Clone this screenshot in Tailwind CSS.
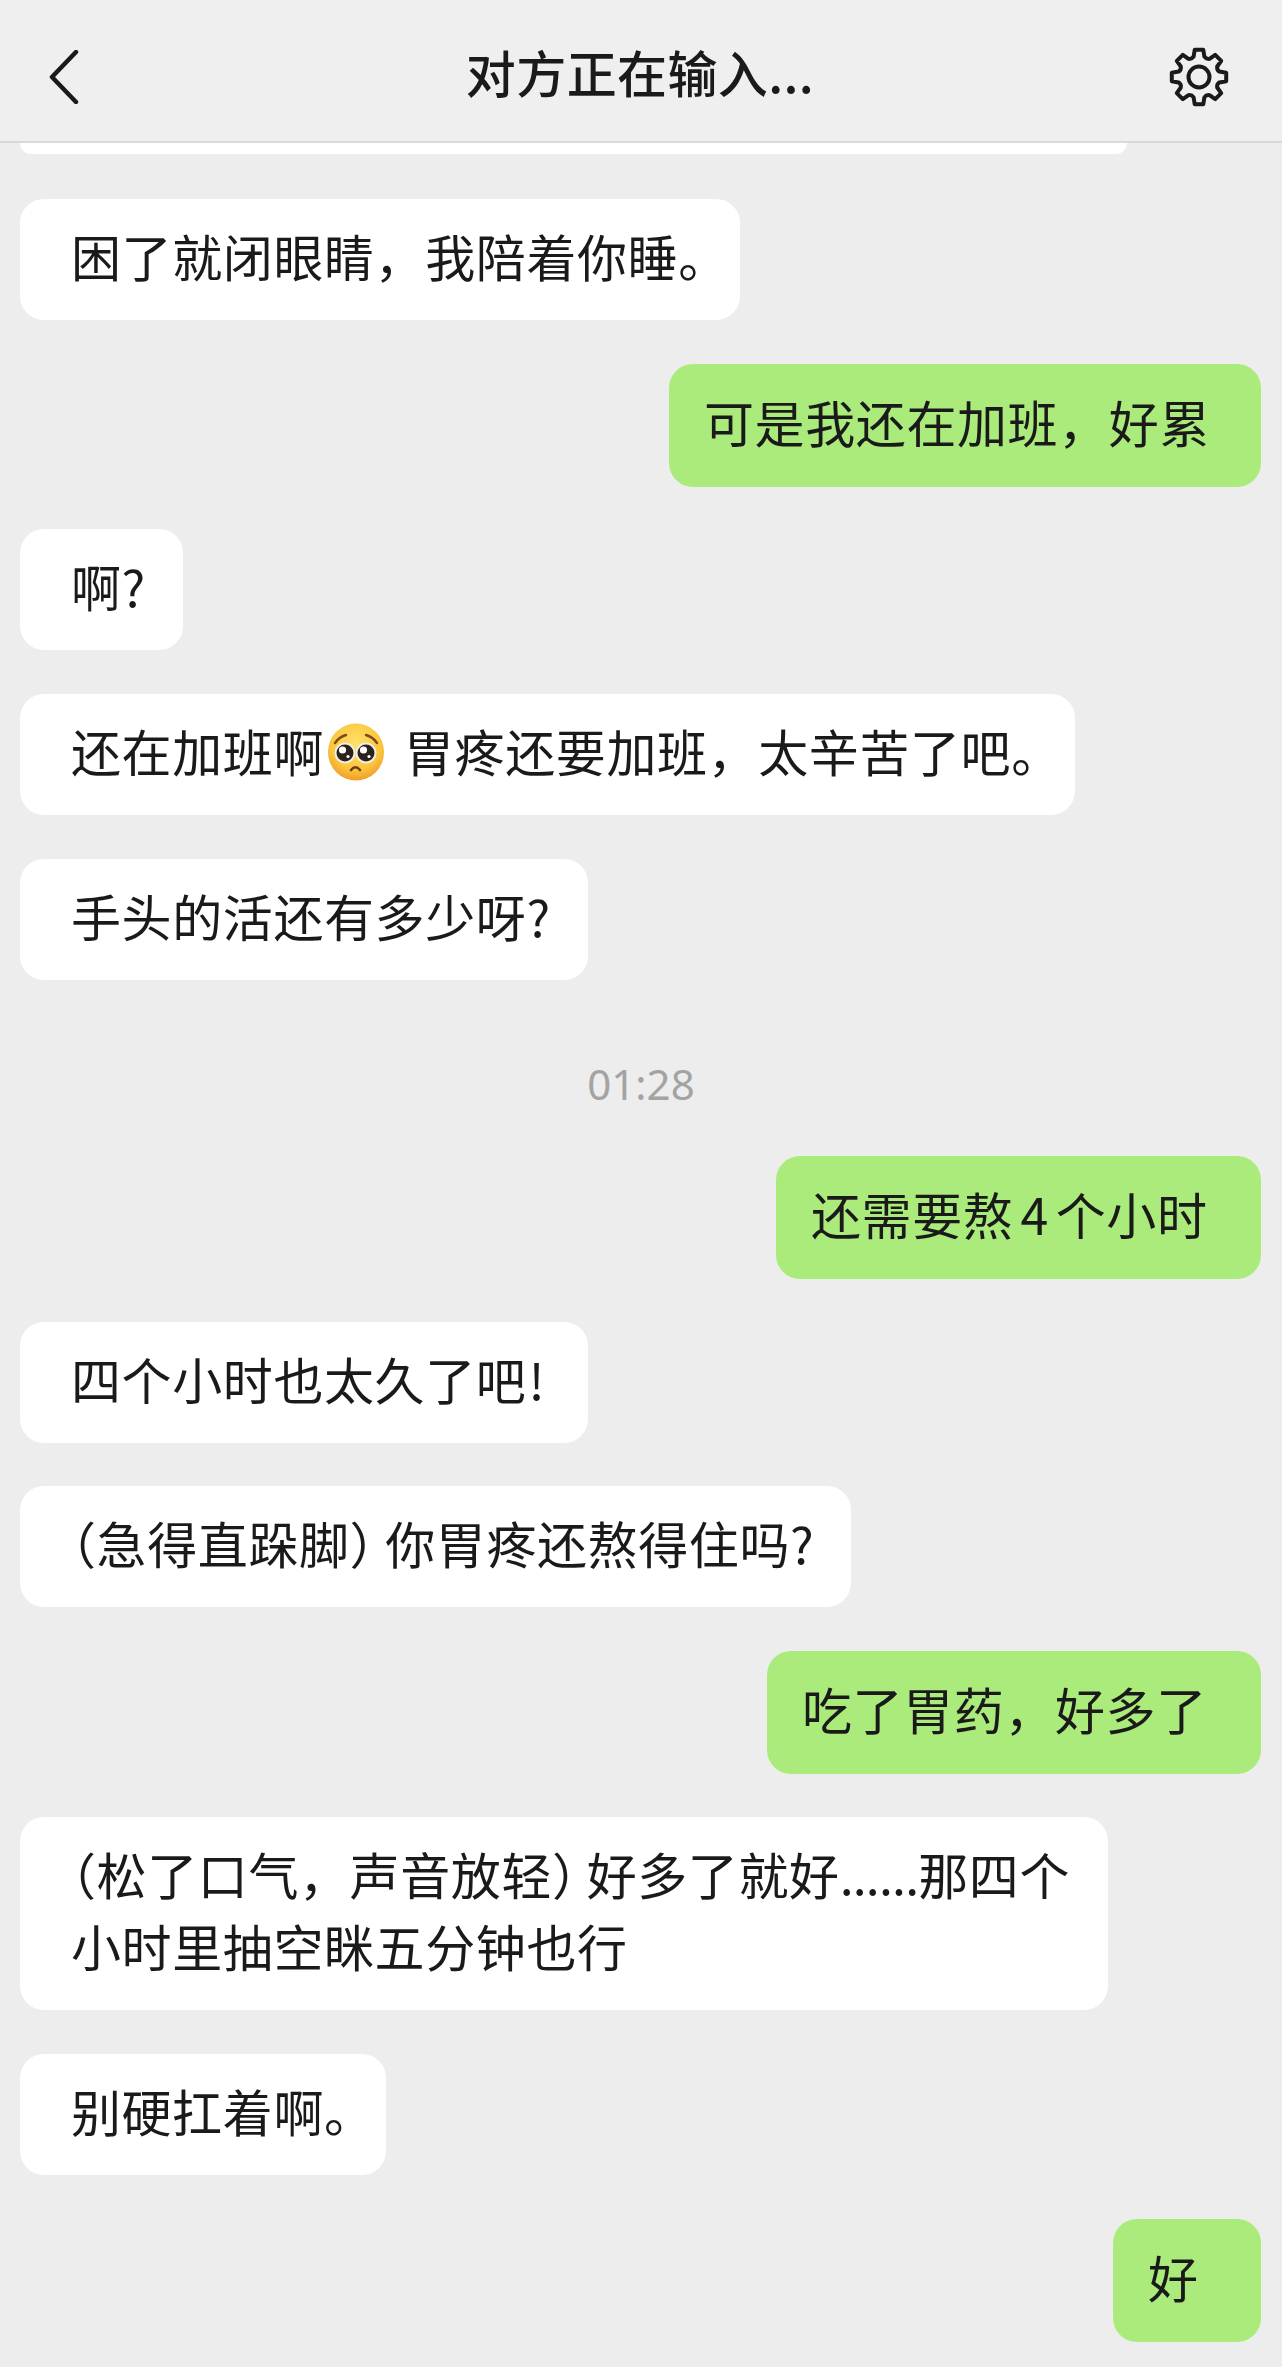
<!DOCTYPE html>
<html lang="zh-CN">
<head>
    <meta charset="UTF-8">
    <meta name="viewport" content="width=device-width, initial-scale=1.0">
    <title>对方正在输入...</title>
    <script src="https://cdn.jsdelivr.net/npm/@tailwindcss/browser@4"></script>
</head>
<body class="bg-[#ededed]">

    <div class="w-[1282px] h-[2367px] overflow-hidden bg-[#ededed] text-[#1a1a1a] font-['Noto_Sans_CJK_SC','Noto_Sans',sans-serif]">

        <!-- Header -->
        <header class="h-[143px] pt-[12px] bg-[#efefef] border-b-2 border-[#d9d9d9] grid grid-cols-[1fr_auto_1fr] items-center pl-[49px] pr-[51px]">
            <svg class="w-[30px] h-[54px]" viewBox="0 0 30 54" fill="none" stroke="#1a1a1a" stroke-width="4.5" stroke-linecap="round" stroke-linejoin="round">
                <path d="M27 2 L3 27 L27 52"></path>
            </svg>
            <h1 class="text-[50px] font-medium leading-none tracking-[0.4px] mb-[11px]">对方正在输入...</h1>
            <svg class="w-[64px] h-[64px] justify-self-end" viewBox="-32 -32 64 64" fill="none" stroke="#1a1a1a" stroke-width="4" stroke-linejoin="round">
                <path d="M-4.3 -27.2 L4.3 -27.2 L5.4 -20.3 Q7.3 -17.6 10.5 -18.2 L16.2 -22.2 L22.2 -16.2 L18.2 -10.5 Q17.6 -7.3 20.3 -5.4 L27.2 -4.3 L27.2 4.3 L20.3 5.4 Q17.6 7.3 18.2 10.5 L22.2 16.2 L16.2 22.2 L10.5 18.2 Q7.3 17.6 5.4 20.3 L4.3 27.2 L-4.3 27.2 L-5.4 20.3 Q-7.3 17.6 -10.5 18.2 L-16.2 22.2 L-22.2 16.2 L-18.2 10.5 Q-17.6 7.3 -20.3 5.4 L-27.2 4.3 L-27.2 -4.3 L-20.3 -5.4 Q-17.6 -7.3 -18.2 -10.5 L-22.2 -16.2 L-16.2 -22.2 L-10.5 -18.2 Q-7.3 -17.6 -5.4 -20.3 Z"></path>
                <circle cx="0" cy="0" r="10.5"></circle>
            </svg>
        </header>

        <!-- Messages -->
        <main class="flex flex-col px-[21px] text-[50px] leading-[72px] tracking-[0.6px]">
            <div class="w-[1107px] h-[11px] bg-white rounded-b-[20px] mb-[45px] -ml-px"></div>

            <div class="w-[720px] bg-white rounded-[24px] pl-[51px] pt-[20px] pb-[29px] mb-[44px] -ml-px">困了就闭眼睛，我陪着你睡。</div>
            <div class="self-end w-[592px] bg-[#abeb7b] rounded-[24px] pl-[35px] pt-[21px] pb-[30px] mb-[42px]">可是我还在加班，好累</div>

            <div class="w-[163px] bg-white rounded-[24px] pl-[51px] pt-[20px] pb-[29px] mb-[44px] -ml-px">啊?</div>
            <div class="w-[1055px] bg-white rounded-[24px] pl-[51px] pt-[20px] pb-[29px] mb-[44px] -ml-px flex items-center">
                <span>还在加班啊</span>
                <svg class="w-[58px] h-[58px] ml-[3px] mr-[19px] mt-[3px] shrink-0" viewBox="0 0 58 58">
                    <defs>
                        <radialGradient id="face" cx="50%" cy="35%" r="70%">
                            <stop offset="0%" stop-color="#ffe169"></stop>
                            <stop offset="65%" stop-color="#fbc53c"></stop>
                            <stop offset="100%" stop-color="#ec9426"></stop>
                        </radialGradient>
                    </defs>
                    <ellipse cx="29" cy="29" rx="28" ry="28.5" fill="url(#face)"></ellipse>
                    <path d="M8 20 Q12 14 19 12" fill="none" stroke="#7a4a1c" stroke-width="2.4" stroke-linecap="round"></path>
                    <path d="M50 20 Q46 14 39 12" fill="none" stroke="#7a4a1c" stroke-width="2.4" stroke-linecap="round"></path>
                    <circle cx="18" cy="30" r="10.5" fill="#f3efe6"></circle>
                    <circle cx="39" cy="30" r="10.5" fill="#f3efe6"></circle>
                    <circle cx="18" cy="30" r="8.5" fill="#2b2320"></circle>
                    <circle cx="39" cy="30" r="8.5" fill="#2b2320"></circle>
                    <circle cx="15.5" cy="27" r="3.6" fill="#ffffff"></circle>
                    <circle cx="36.5" cy="27" r="3.6" fill="#ffffff"></circle>
                    <circle cx="21" cy="33.5" r="1.6" fill="#ffffff"></circle>
                    <circle cx="42" cy="33.5" r="1.6" fill="#ffffff"></circle>
                    <path d="M24 47 Q28.5 41.5 33 47" fill="none" stroke="#6b3d14" stroke-width="2.6" stroke-linecap="round"></path>
                </svg>
                <span>胃疼还要加班，太辛苦了吧。</span>
            </div>
            <div class="w-[568px] bg-white rounded-[24px] pl-[51px] pt-[20px] pb-[29px] -ml-px">手头的活还有多少呀?</div>

            <div class="self-center text-[42px] leading-[50px] tracking-normal text-[#a3a3a3] font-['Noto_Sans',sans-serif] mt-[79px] mb-[47px]">01:28</div>

            <div class="self-end w-[485px] bg-[#abeb7b] rounded-[24px] pl-[35px] pt-[21px] pb-[30px] mb-[43px]">还需要熬<span class="mx-[7px]">4</span>个小时</div>

            <div class="w-[568px] bg-white rounded-[24px] pl-[51px] pt-[20px] pb-[29px] mb-[43px] -ml-px">四个小时也太久了吧<span class="ml-[2px]">!</span></div>
            <div class="w-[831px] bg-white rounded-[24px] pl-[51px] pt-[20px] pb-[29px] mb-[44px] -ml-px"><span class="[font-feature-settings:'halt']">（</span>急得直跺脚<span class="[font-feature-settings:'halt'] mr-[10px]">）</span>你胃疼还熬得住吗?</div>
            <div class="self-end w-[494px] bg-[#abeb7b] rounded-[24px] pl-[35px] pt-[21px] pb-[30px] mb-[43px]">吃了胃药，好多了</div>

            <div class="w-[1088px] bg-white rounded-[24px] pl-[51px] pt-[20px] pb-[29px] mb-[44px] -ml-px"><span class="[font-feature-settings:'halt']">（</span>松了口气，声音放轻<span class="[font-feature-settings:'halt'] mr-[9px]">）</span>好多了就好<span class="tracking-[-0.8px]">......</span>那四个<br>小时里抽空眯五分钟也行</div>
            <div class="w-[366px] bg-white rounded-[24px] pl-[51px] pt-[20px] pb-[29px] mb-[44px] -ml-px">别硬扛着啊。</div>
            <div class="self-end w-[148px] bg-[#abeb7b] rounded-[24px] pl-[35px] pt-[21px] pb-[30px]">好</div>
        </main>
    </div>

</body>
</html>
